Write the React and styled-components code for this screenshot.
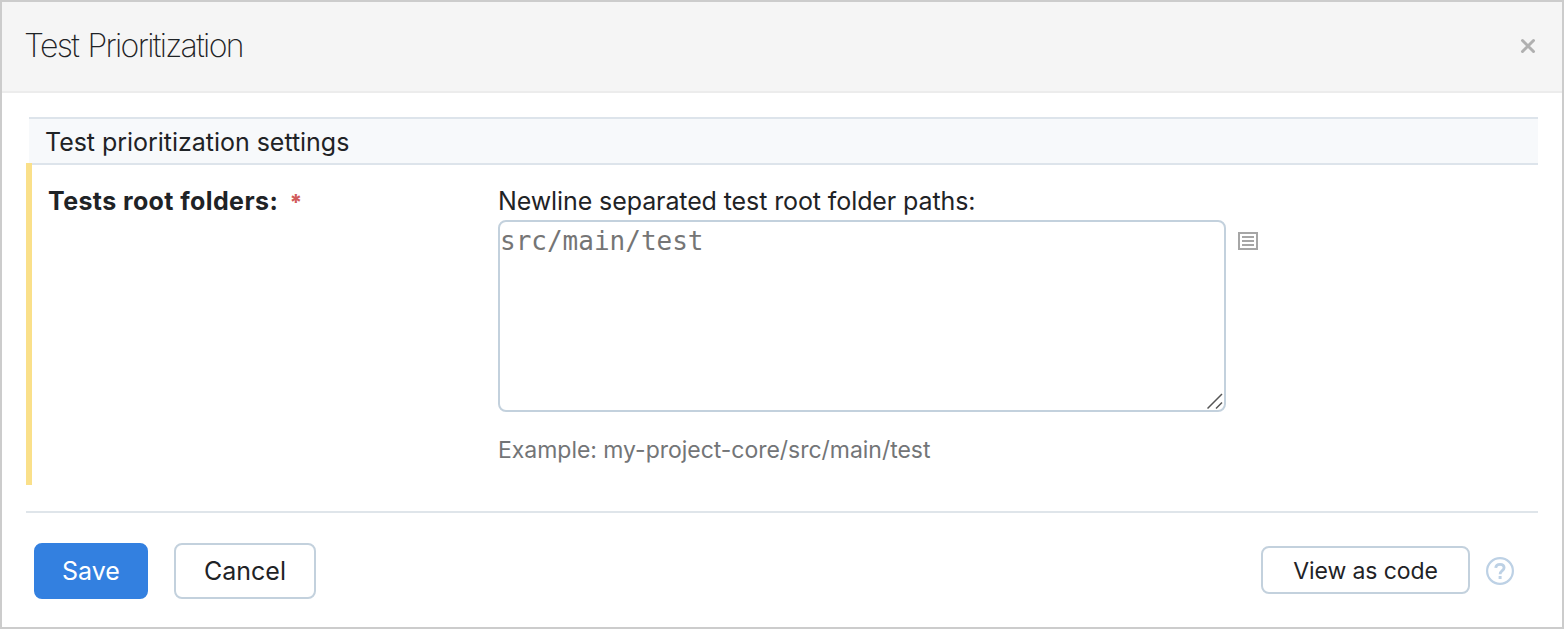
import React from "react";
import styled, { createGlobalStyle } from "styled-components";

const GlobalStyle = createGlobalStyle`
  * { box-sizing: border-box; }
  body {
    margin: 0;
    background: #fff;
    color: #1f2326;
    font-family: Inter, "Liberation Sans", sans-serif;
    font-size: 25px;
    line-height: 32px;
  }
`;

const Dialog = styled.main`
  display: flex;
  flex-direction: column;
  width: 1564px;
  height: 629px;
  border: 2px solid #ccc;
  background: #fff;
  overflow: hidden;
`;

const Header = styled.header`
  display: flex;
  flex: none;
  align-items: center;
  justify-content: space-between;
  height: 91px;
  padding: 0 26px 1px 22px;
  background: #f5f5f5;
  border-bottom: 2px solid #ececec;
`;

const Title = styled.h1`
  margin: 0;
  font-size: 32px;
  font-weight: 200;
  line-height: 40px;
  letter-spacing: -1.65px;
  word-spacing: 2px;
  white-space: nowrap;
`;

const CloseButton = styled.button`
  display: flex;
  padding: 0;
  border: 0;
  background: none;
  color: #b0b0b0;
`;

const Content = styled.section`
  display: flex;
  flex: none;
  flex-direction: column;
  padding: 24px 24px 0;
`;

const SectionHeading = styled.h2`
  height: 46px;
  margin: 0 0 0 3px;
  padding: 7px 0 0 16px;
  border-top: 2px solid #dde4eb;
  background: #f7f9fb;
  font-size: 25px;
  font-weight: 400;
  line-height: 32px;
  letter-spacing: -0.03px;
`;

const SettingRow = styled.div`
  display: grid;
  grid-template-columns: 6px 466px 1fr;
  height: 322px;
`;

const ChangedMarker = styled.div`
  background: #fae08a;
`;

const Label = styled.label`
  padding: 20px 0 0 16px;
  border-top: 2px solid #dde4eb;
  font-weight: 700;
  letter-spacing: 0.4px;
`;

const Required = styled.span`
  margin-left: 5px;
  color: #d15b5b;
  font-size: 22px;
  font-weight: 800;
`;

const Field = styled.div`
  padding-top: 20px;
  border-top: 2px solid #dde4eb;
`;

const FieldCaption = styled.div`
  height: 35px;
  letter-spacing: -0.1px;
`;

const EditorRow = styled.div`
  display: flex;
  align-items: flex-start;
  gap: 12px;
`;

const Editor = styled.div`
  position: relative;
  display: flex;
`;

const TextArea = styled.textarea`
  width: 728px;
  height: 192px;
  margin: 0;
  padding: 3px 0;
  border: 2px solid #c3d1dd;
  border-radius: 8px;
  outline: 0;
  resize: none;
  background: #fff;
  font: 26px/32px "DejaVu Sans Mono", monospace;
  &::placeholder { color: #757575; opacity: 1; }
`;

const ResizeGrip = styled.svg`
  position: absolute;
  right: 3px;
  bottom: 3px;
`;

const ParameterIcon = styled.svg`
  margin-top: 12px;
`;

const Hint = styled.div`
  margin-top: 22px;
  color: #737577;
  font-size: 23px;
  letter-spacing: -0.03px;
`;

const Footer = styled.footer`
  display: flex;
  flex: none;
  align-items: center;
  height: 116px;
  margin: 26px 24px 0;
  padding: 2px 24px 0 8px;
  border-top: 2px solid #dfe5ea;
`;

const Button = styled.button`
  width: ${(p) => p.$width}px;
  height: ${(p) => (p.$small ? 48 : 56)}px;
  margin: 0 0 ${(p) => (p.$small ? 2 : 0)}px;
  padding: ${(p) => (p.$small ? 2 : 0)}px 0 0;
  border: 2px solid ${(p) => (p.$primary ? "#3380e0" : "#c3d1dd")};
  border-radius: 8px;
  background: ${(p) => (p.$primary ? "#3380e0" : "#fff")};
  color: ${(p) => (p.$primary ? "#fff" : "#1f2326")};
  font: 400 ${(p) => (p.$small ? 23 : 25)}px/32px Inter, "Liberation Sans", sans-serif;
  letter-spacing: ${(p) => (p.$small ? -0.1 : 0)}px;
`;

const ButtonGroup = styled.div`
  display: flex;
  align-items: center;
  gap: ${(p) => p.$gap}px;
  margin-left: ${(p) => (p.$end ? "auto" : 0)};
`;

export default function App() {
  return (
    <>
      <GlobalStyle />
      <Dialog>
        <Header>
          <Title>Test Prioritization</Title>
          <CloseButton aria-label="Close">
            <svg width="16" height="16" viewBox="0 0 16 16" fill="none" stroke="currentColor" strokeWidth="3" strokeLinecap="round">
              <path d="M2.5 2.5 13.5 13.5M13.5 2.5 2.5 13.5" />
            </svg>
          </CloseButton>
        </Header>
        <Content>
          <SectionHeading>Test prioritization settings</SectionHeading>
          <SettingRow>
            <ChangedMarker />
            <Label htmlFor="folders">
              Tests root folders: <Required>*</Required>
            </Label>
            <Field>
              <FieldCaption>Newline separated test root folder paths:</FieldCaption>
              <EditorRow>
                <Editor>
                  <TextArea id="folders" placeholder="src/main/test" />
                  <ResizeGrip width="16" height="16" viewBox="0 0 16 16" fill="none" stroke="#555" strokeWidth="1.5">
                    <path d="M.5 15.5 15 1M9 15.5 15 9.5" />
                  </ResizeGrip>
                </Editor>
                <ParameterIcon width="20" height="18" viewBox="0 0 20 18" fill="none" stroke="#a6a6a6" strokeWidth="2">
                  <path d="M1 1H19V17H1ZM4 5H16M4 9H16M4 13H16" />
                </ParameterIcon>
              </EditorRow>
              <Hint>Example: my-project-core/src/main/test</Hint>
            </Field>
          </SettingRow>
        </Content>
        <Footer>
          <ButtonGroup $gap={26}>
            <Button $primary $width={114}>Save</Button>
            <Button $width={142}>Cancel</Button>
          </ButtonGroup>
          <ButtonGroup $gap={16} $end>
            <Button $small $width={209}>View as code</Button>
            <svg width="28" height="28" viewBox="0 0 28 28" fill="none" stroke="#bdd1e5">
              <circle cx="14" cy="14" r="12.9" strokeWidth="2.2" />
              <path d="M9.7 10.8C9.9 8.5 11.6 7.4 14 7.4C16.5 7.4 18.1 8.7 18.1 10.8C18.1 13.7 14.1 13.7 14.1 17.3" strokeWidth="2.8" />
              <path d="M14.1 19V22" strokeWidth="3" />
            </svg>
          </ButtonGroup>
        </Footer>
      </Dialog>
    </>
  );
}
